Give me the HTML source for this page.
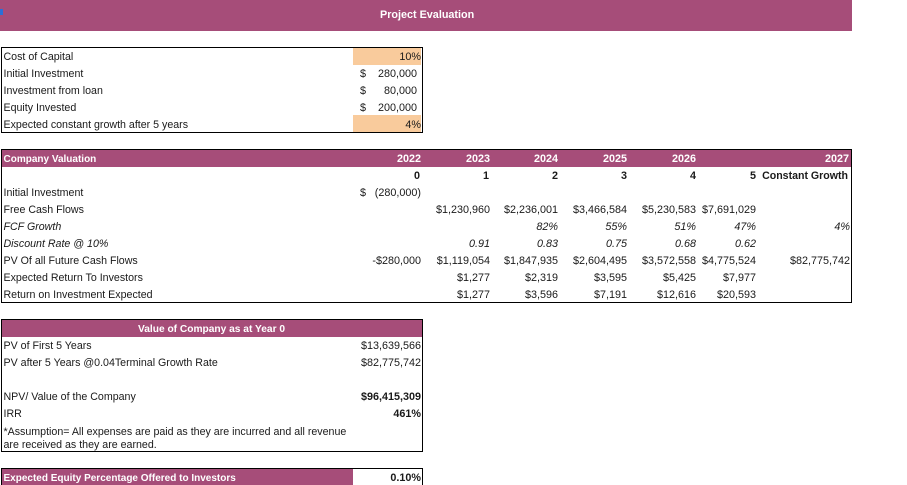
<!DOCTYPE html>
<html><head><meta charset="utf-8"><style>
html,body{margin:0;padding:0;background:#fff;width:907px;height:485px;overflow:hidden}
body{position:relative;font:10.65px/17px "Liberation Sans",Arial,sans-serif;color:#1a1a1a}
div{position:absolute;box-sizing:border-box}
.p{background:#a64d79}
.b{border:1px solid #000}
.l,.r{position:absolute;white-space:nowrap;margin-top:1px}
.l{left:3.5px}
.r{font-size:10.8px}
.h{color:#fff;font-weight:bold}
.l.h{font-size:10px}
.bd{font-weight:bold}
.i{font-style:italic}
</style></head><body>
<div class="p" style="left:0;top:0;width:852px;height:31px"></div>
<div style="left:0;top:9px;width:3px;height:6px;background:#2a6fd8"></div>
<span class="r h" style="left:380px;top:6px">Project Evaluation</span>

<div style="left:353px;top:48px;width:68px;height:17px;background:#f9cb9c"></div>
<div style="left:353px;top:115px;width:68px;height:17px;background:#f9cb9c"></div>
<div class="b" style="left:1px;top:47px;width:422px;height:86px"></div>
<span class="l" style="top:48px">Cost of Capital</span><span class="r" style="right:486px;top:48px">10%</span>
<span class="l" style="top:65px">Initial Investment</span><span class="r" style="left:360px;top:65px">$</span><span class="r" style="right:490px;top:65px">280,000</span>
<span class="l" style="top:82px">Investment from loan</span><span class="r" style="left:360px;top:82px">$</span><span class="r" style="right:490px;top:82px">80,000</span>
<span class="l" style="top:99px">Equity Invested</span><span class="r" style="left:360px;top:99px">$</span><span class="r" style="right:490px;top:99px">200,000</span>
<span class="l" style="top:116px">Expected constant growth after 5 years</span><span class="r" style="right:486px;top:116px">4%</span>

<div class="p" style="left:1px;top:150px;width:851px;height:17px"></div>
<div class="b" style="left:1px;top:149px;width:851px;height:154px"></div>
<span class="l h" style="top:150px">Company Valuation</span>
<span class="r h" style="right:486px;top:150px">2022</span>
<span class="r h" style="right:417px;top:150px">2023</span>
<span class="r h" style="right:349px;top:150px">2024</span>
<span class="r h" style="right:280px;top:150px">2025</span>
<span class="r h" style="right:211px;top:150px">2026</span>
<span class="r h" style="right:58px;top:150px">2027</span>

<span class="r bd" style="right:487px;top:167px">0</span>
<span class="r bd" style="right:418px;top:167px">1</span>
<span class="r bd" style="right:349px;top:167px">2</span>
<span class="r bd" style="right:280px;top:167px">3</span>
<span class="r bd" style="right:211px;top:167px">4</span>
<span class="r bd" style="right:151px;top:167px">5</span>
<span class="r bd" style="right:59px;top:167px;font-size:10.6px">Constant Growth</span>

<span class="l" style="top:184px">Initial Investment</span><span class="r" style="left:360px;top:184px">$</span><span class="r" style="right:486px;top:184px">(280,000)</span>

<span class="l" style="top:201px">Free Cash Flows</span>
<span class="r" style="right:417px;top:201px">$1,230,960</span>
<span class="r" style="right:349px;top:201px">$2,236,001</span>
<span class="r" style="right:280px;top:201px">$3,466,584</span>
<span class="r" style="right:211px;top:201px">$5,230,583</span>
<span class="r" style="right:151px;top:201px">$7,691,029</span>

<span class="l i" style="top:218px">FCF Growth</span>
<span class="r i" style="right:349px;top:218px">82%</span>
<span class="r i" style="right:280px;top:218px">55%</span>
<span class="r i" style="right:211px;top:218px">51%</span>
<span class="r i" style="right:151px;top:218px">47%</span>
<span class="r i" style="right:57px;top:218px">4%</span>

<span class="l i" style="top:235px">Discount Rate @ 10%</span>
<span class="r i" style="right:417px;top:235px">0.91</span>
<span class="r i" style="right:349px;top:235px">0.83</span>
<span class="r i" style="right:280px;top:235px">0.75</span>
<span class="r i" style="right:211px;top:235px">0.68</span>
<span class="r i" style="right:151px;top:235px">0.62</span>

<span class="l" style="top:252px">PV Of all Future Cash Flows</span>
<span class="r" style="right:486px;top:252px">-$280,000</span>
<span class="r" style="right:417px;top:252px">$1,119,054</span>
<span class="r" style="right:349px;top:252px">$1,847,935</span>
<span class="r" style="right:280px;top:252px">$2,604,495</span>
<span class="r" style="right:211px;top:252px">$3,572,558</span>
<span class="r" style="right:151px;top:252px">$4,775,524</span>
<span class="r" style="right:57px;top:252px">$82,775,742</span>

<span class="l" style="top:269px">Expected Return To Investors</span>
<span class="r" style="right:417px;top:269px">$1,277</span>
<span class="r" style="right:349px;top:269px">$2,319</span>
<span class="r" style="right:280px;top:269px">$3,595</span>
<span class="r" style="right:211px;top:269px">$5,425</span>
<span class="r" style="right:151px;top:269px">$7,977</span>

<span class="l" style="top:286px">Return on Investment Expected</span>
<span class="r" style="right:417px;top:286px">$1,277</span>
<span class="r" style="right:349px;top:286px">$3,596</span>
<span class="r" style="right:280px;top:286px">$7,191</span>
<span class="r" style="right:211px;top:286px">$12,616</span>
<span class="r" style="right:151px;top:286px">$20,593</span>

<div class="p" style="left:1px;top:320px;width:421px;height:17px"></div>
<div class="b" style="left:1px;top:319px;width:422px;height:133px"></div>
<span class="r h" style="left:138px;top:320px;font-size:10.2px">Value of Company as at Year 0</span>
<span class="l" style="top:337px">PV of First 5 Years</span><span class="r" style="right:486px;top:337px">$13,639,566</span>
<span class="l" style="top:354px">PV after 5 Years @0.04Terminal Growth Rate</span><span class="r" style="right:486px;top:354px">$82,775,742</span>
<span class="l" style="top:388px">NPV/ Value of the Company</span><span class="r bd" style="right:486px;top:388px">$96,415,309</span>
<span class="l" style="top:405px">IRR</span><span class="r bd" style="right:486px;top:405px">461%</span>
<span class="l" style="top:425px;line-height:13px;white-space:normal;width:350px">*Assumption= All expenses are paid as they are incurred and all revenue are received as they are earned.</span>

<div class="p" style="left:1px;top:469px;width:352px;height:16px"></div>
<div class="b" style="left:1px;top:468px;width:422px;height:20px"></div>
<span class="l h" style="top:469px">Expected Equity Percentage Offered to Investors</span>
<span class="r bd" style="right:486px;top:469px">0.10%</span>
</body></html>
